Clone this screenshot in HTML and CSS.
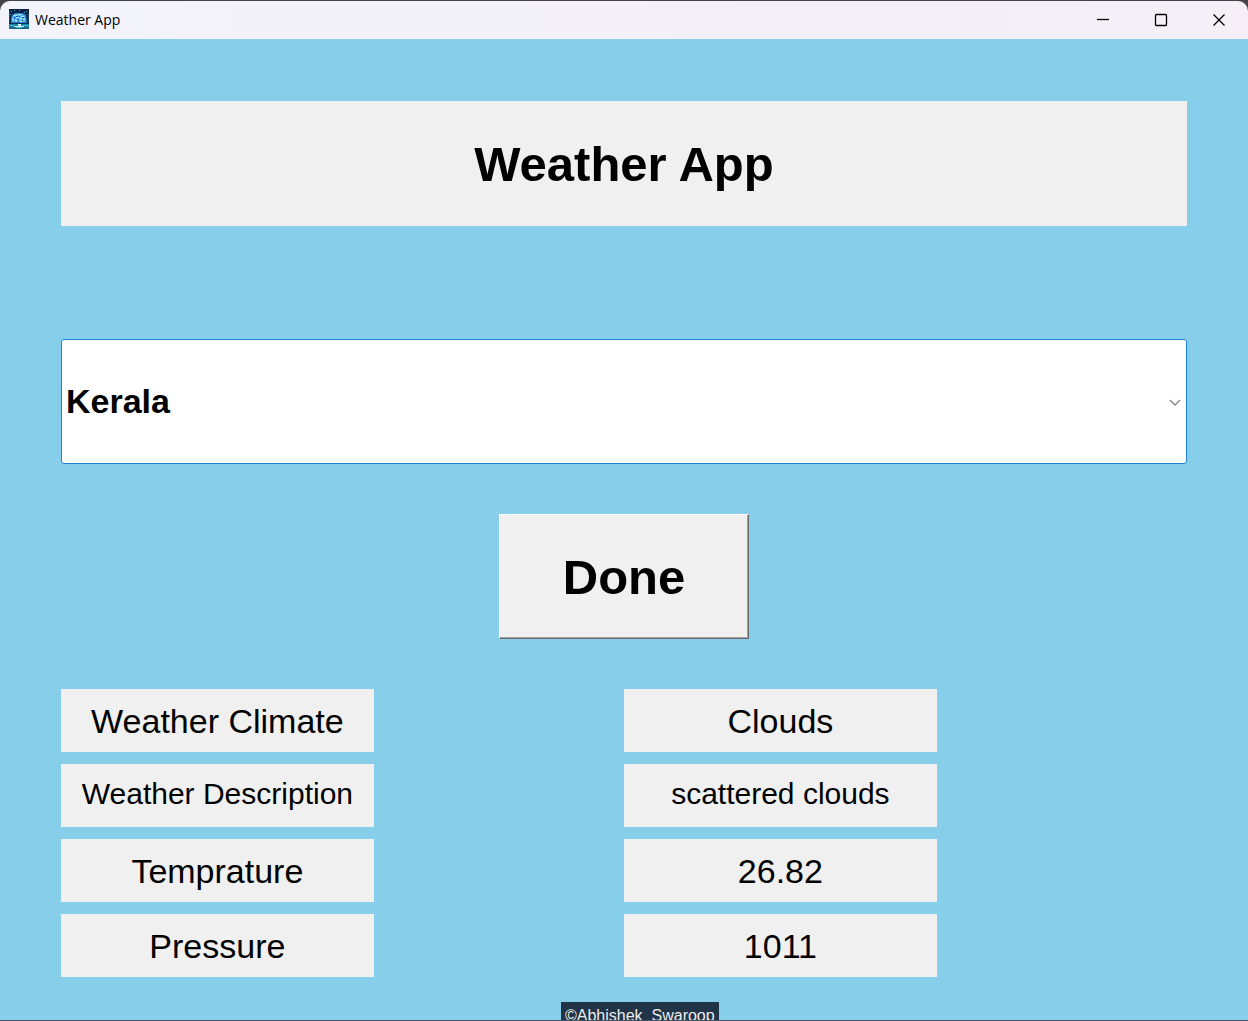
FILE: index.html
```html
<!DOCTYPE html>
<html lang="en">
<head>
  <meta charset="utf-8">
  <meta name="viewport" content="width=device-width, initial-scale=1">
  <title>Weather App</title>
  <link rel="stylesheet" href="styles.css">
</head>
<body>
  <div class="window">
    <header class="titlebar">
      <svg class="app-icon" viewBox="0 0 20 20" aria-hidden="true">
        <rect width="20" height="20" fill="#0b2347"/>
        <path d="M0 15h20v5H0z" fill="#1f7fa8"/>
        <path d="M0 2h1v12H0zM19 5h1v9h-1z" fill="#17506f"/>
        <path d="M2 2h1v1H2zM5 1h1v1H5zM10 1h1v1h-1zM17 2h1v1h-1zM15 3h1v1h-1zM1 5h1v1H1z" fill="#39a9c9"/>
        <path d="M3 6l3-2h8l3 2 1 8H2V9z" fill="#2b7fd0"/>
        <path d="M4 6l3-1h6l3 2 1 3-1 3H3V9z" fill="#54b4f0"/>
        <path d="M5 6h3v1H5zM9 5h3v1H9zM7 8h2v1H7zM12 7h3v1h-3zM3 10h2v1H3zM10 9h3v1h-3zM6 11h2v1H6zM14 10h2v1h-2zM11 12h2v1h-2z" fill="#b4efff"/>
        <path d="M7 7h2v1H7zM10 7h1v1h-1zM5 8h1v2H5zM8 10h2v1H8zM13 8h2v1h-2zM9 12h1v1H9zM13 11h1v1h-1z" fill="#104d9d"/>
        <path d="M2 14h16v1H2z" fill="#0a2e58"/>
        <path d="M9 15h3v2H9z" fill="#c3f4fa"/>
        <path d="M5 17h10v1H5z" fill="#c3f4fa"/>
        <path d="M0 18h20v2H0z" fill="#15698d"/>
        <path d="M1 16h4v1H1zM14 16h5v1h-5zM7 18h6v1H7z" fill="#48b5d2"/>
      </svg>
      <span class="titlebar-text">Weather App</span>
      <div class="window-controls">
        <button class="window-button" type="button" aria-label="Minimize">
          <svg viewBox="0 0 14 14"><path d="M1 6.500h12"/></svg>
        </button>
        <button class="window-button" type="button" aria-label="Maximize">
          <svg viewBox="0 0 14 14"><rect x="1.500" y="1.500" width="11" height="11" rx="1"/></svg>
        </button>
        <button class="window-button" type="button" aria-label="Close">
          <svg viewBox="0 0 14 14"><path d="M1.500 1.500l11 11M12.500 1.500l-11 11"/></svg>
        </button>
      </div>
    </header>

    <main class="content">
      <h1 class="heading">Weather App</h1>

      <form class="search">
        <div class="select-wrap">
          <select class="state-select" aria-label="State">
            <option>Kerala</option>
          </select>
          <svg class="chevron" viewBox="0 0 12 8" aria-hidden="true"><path d="M1 1l5 5 5-5"/></svg>
        </div>
        <button class="done-button" type="button">Done</button>
      </form>

      <table class="report">
        <tbody>
          <tr><th scope="row">Weather Climate</th><td>Clouds</td></tr>
          <tr class="compact"><th scope="row">Weather Description</th><td>scattered clouds</td></tr>
          <tr><th scope="row">Temprature</th><td>26.82</td></tr>
          <tr><th scope="row">Pressure</th><td>1011</td></tr>
        </tbody>
      </table>

      <footer class="credit">©Abhishek_Swaroop</footer>
    </main>
  </div>
</body>
</html>
```
FILE: styles.css
```css
* {
  box-sizing: border-box;
}

body {
  margin: 0;
  background: #454347;
  color: #000;
  font-family: "Liberation Sans", Arial, sans-serif;
}

.window {
  display: flex;
  flex-direction: column;
  height: 100vh;
  border-top: 1px solid #454347;
  border-bottom: 1px solid #435563;
  overflow: hidden;
}

.titlebar {
  display: flex;
  flex: none;
  align-items: center;
  height: 38px;
  padding-left: 9px;
  border-radius: 10px 10px 0 0;
  background: linear-gradient(90deg, #f3f3fb, #f3f0f8 60%, #f6eff7);
}

.app-icon {
  width: 20px;
  height: 20px;
  margin-bottom: 2px;
}

.titlebar-text {
  margin-left: 6px;
  padding-bottom: 1px;
  font-family: "Open Sans", "Noto Sans", sans-serif;
  font-size: 14px;
  line-height: 20px;
}

.window-controls {
  display: flex;
  align-self: stretch;
  margin-left: auto;
}

.window-button {
  display: flex;
  align-items: center;
  justify-content: center;
  width: 58px;
  padding: 0;
  border: 0;
  background: none;
}

.window-button svg {
  width: 14px;
  height: 14px;
  fill: none;
  stroke: #000;
  stroke-width: 1.3;
}

.content {
  display: flex;
  flex: 1;
  flex-direction: column;
  min-height: 0;
  padding: 62px 61px 0;
  background: #87ceeb;
}

.heading {
  flex: none;
  margin: 0;
  padding: 34px 0 33px;
  background: #f0f0f0;
  font-size: 49px;
  line-height: 58px;
  text-align: center;
}

.search {
  display: flex;
  flex: none;
  flex-direction: column;
  align-items: center;
  gap: 50px;
  margin: 113px 0 50px;
}

.select-wrap {
  position: relative;
  width: 100%;
}

.state-select {
  display: block;
  width: 100%;
  height: 125px;
  padding: 0 32px 2px 4px;
  border: 1px solid #1f83d3;
  border-radius: 3px;
  outline: 0;
  appearance: none;
  background: #fff;
  color: #000;
  font: bold 34px/40px "Liberation Sans", Arial, sans-serif;
}

.chevron {
  position: absolute;
  top: 60px;
  right: 6px;
  width: 12px;
  height: 8px;
  fill: none;
  stroke: #858585;
  stroke-width: 1.4;
  pointer-events: none;
}

.done-button {
  width: 250px;
  height: 125px;
  padding: 0;
  border: 1px solid;
  border-color: #fff #696969 #696969 #fff;
  border-radius: 0;
  box-shadow: inset -1px -1px #a0a0a0;
  background: #f0f0f0;
  color: #000;
  font: bold 49px/58px "Liberation Sans", Arial, sans-serif;
}

.report {
  display: block;
  flex: none;
}

.report tbody {
  display: flex;
  flex-direction: column;
  gap: 12px;
}

.report tr {
  display: grid;
  grid-template-columns: 5fr 4fr 5fr 4fr;
}

.report th,
.report td {
  padding: 12px 0 11px;
  background: #f0f0f0;
  font-size: 34px;
  font-weight: normal;
  line-height: 40px;
  text-align: center;
  white-space: nowrap;
}

.report td {
  grid-column: 3;
}

.report .compact th,
.report .compact td {
  padding: 10px 0 13px;
  font-size: 30px;
}

.credit {
  flex: none;
  align-self: flex-start;
  margin: 25px 0 0 500px;
  padding: 5px 4px;
  background: #213347;
  color: #eee;
  font-size: 16px;
  line-height: 18px;
}
```
